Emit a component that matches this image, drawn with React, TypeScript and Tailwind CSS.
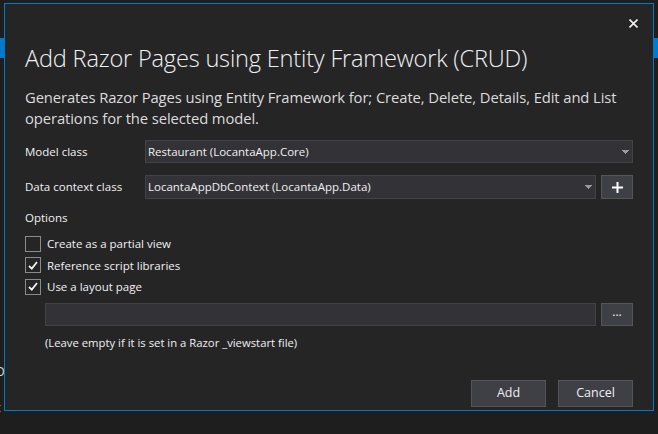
import React from "react";

const font = { fontFamily: '"Open Sans", "Noto Sans", sans-serif' };

function Arrow() {
  return (
    <svg width="7" height="4" viewBox="0 0 7 4" className="shrink-0">
      <path d="M0 0H7V1H6V2H5V3H2V2H1V1H0Z" fill="#999999" />
      <rect x="3" y="3" width="1" height="1" fill="#999999" />
    </svg>
  );
}

function Check({ checked, label }: { checked: boolean; label: string }) {
  return (
    <div className="flex items-center h-[21.5px]">
      <div className="w-[16px] h-[16px] border border-[#8a8a8a] flex items-center justify-center">
        {checked && (
          <svg width="10" height="9" viewBox="0 0 10 9">
            <path d="M1 5L3.8 7.6L9 1" stroke="#f1f1f1" strokeWidth="1.8" fill="none" />
          </svg>
        )}
      </div>
      <span className="ml-[6px] text-[11.5px] text-[#f1f1f1]">{label}</span>
    </div>
  );
}

export default function App() {
  return (
    <div className="relative w-[658px] h-[434px] bg-[#1e1e1e] overflow-hidden" style={font}>
      <div className="absolute left-0 top-[38px] w-[4px] h-[20px] bg-[#007acc]" />
      <div className="absolute right-0 top-[38px] w-[4px] h-[20px] bg-[#007acc]" />
      <div className="absolute left-[-4px] top-[365px] text-[12px] leading-[14px] text-[#e0e0e0]">D</div>
      <div className="absolute left-[-5px] top-[401px] text-[12px] leading-[14px] text-[#e0e0e0]">c</div>

      <div className="relative ml-[4px] mt-[3px] w-[650px] h-[408px] border border-[#007acc] bg-[#252526] pl-[20px] pr-[20px]">
        <button className="absolute right-[13px] top-[12px] w-[14px] h-[14px] flex items-center justify-center">
          <svg width="9" height="9" viewBox="0 0 9 9">
            <path d="M0.5 0.5L8.5 8.5M8.5 0.5L0.5 8.5" stroke="#f1f1f1" strokeWidth="1.6" />
          </svg>
        </button>

        <div className="pt-[38px] text-[23.6px] leading-[32px] font-light text-[#f1f1f1] tracking-[-0.2px]">
          Add Razor Pages using Entity Framework (CRUD)
        </div>
        <div className="mt-[13px] text-[14.8px] leading-[21px] text-[#dcdcdc] tracking-[-0.1px] whitespace-nowrap">
          Generates Razor Pages using Entity Framework for; Create, Delete, Details, Edit and List
          <br />
          operations for the selected model.
        </div>

        <div className="mt-[11px] flex items-center h-[23px]">
          <div className="w-[120px] text-[11.5px] text-[#f1f1f1]">Model class</div>
          <div className="flex-1 h-[23px] bg-[#333337] border border-[#434346] flex items-center pl-[2px] pr-[3px]">
            <span className="flex-1 text-[11.5px] text-[#f1f1f1]">Restaurant (LocantaApp.Core)</span>
            <Arrow />
          </div>
        </div>

        <div className="mt-[12px] flex items-center h-[24px]">
          <div className="w-[120px] text-[11.5px] text-[#f1f1f1]">Data context class</div>
          <div className="flex-1 h-[24px] bg-[#333337] border border-[#434346] flex items-center pl-[2px] pr-[3px]">
            <span className="flex-1 text-[11.5px] text-[#f1f1f1]">LocantaAppDbContext (LocantaApp.Data)</span>
            <Arrow />
          </div>
          <div className="ml-[5px] w-[32px] h-[24px] bg-[#3f3f46] border border-[#555555] flex items-center justify-center">
            <svg width="11" height="11" viewBox="0 0 11 11">
              <path d="M5.5 0V11M0 5.5H11" stroke="#ffffff" strokeWidth="2" />
            </svg>
          </div>
        </div>

        <div className="mt-[10px] text-[11.5px] text-[#f1f1f1] leading-[18px]">Options</div>
        <div className="mt-[6px] flex flex-col">
          <Check checked={false} label="Create as a partial view" />
          <Check checked={true} label="Reference script libraries" />
          <Check checked={true} label="Use a layout page" />
        </div>

        <div className="mt-[5px] ml-[20px] flex items-center h-[23px]">
          <div className="flex-1 h-[23px] bg-[#333337] border border-[#434346]" />
          <div className="ml-[5px] w-[32px] h-[23px] bg-[#3f3f46] border border-[#555555] flex items-center justify-center text-[12px] text-[#f1f1f1] leading-none pb-[4px]">
            ...
          </div>
        </div>
        <div className="mt-[9px] ml-[20px] text-[11.3px] text-[#f1f1f1]">
          (Leave empty if it is set in a Razor _viewstart file)
        </div>

        <div className="absolute right-[20px] bottom-[3px] flex gap-[12px]">
          <button className="w-[75px] h-[27px] bg-[#3f3f46] border border-[#555555] text-[12.5px] text-[#f1f1f1]">Add</button>
          <button className="w-[75px] h-[27px] bg-[#3f3f46] border border-[#555555] text-[12.5px] text-[#f1f1f1]">Cancel</button>
        </div>
      </div>
    </div>
  );
}
